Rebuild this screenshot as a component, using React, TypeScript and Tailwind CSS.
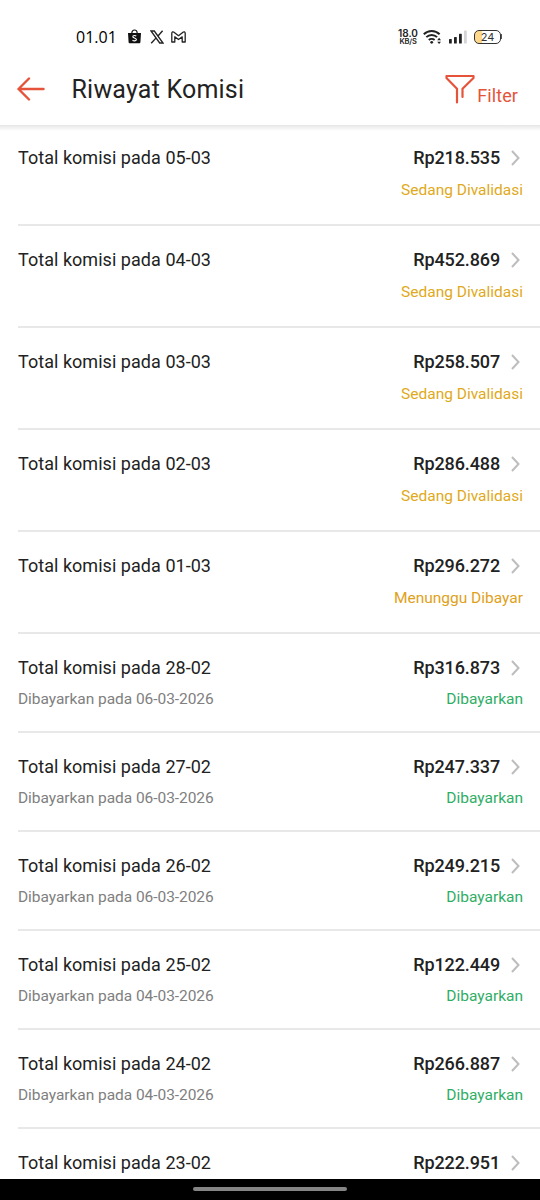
type Status = 'Sedang Divalidasi' | 'Menunggu Dibayar' | 'Dibayarkan';

type Commission = {
  date: string;
  amount: string;
  status?: Status;
  paidAt?: string;
};

const commissions: Commission[] = [
  { date: '05-03', amount: 'Rp218.535', status: 'Sedang Divalidasi' },
  { date: '04-03', amount: 'Rp452.869', status: 'Sedang Divalidasi' },
  { date: '03-03', amount: 'Rp258.507', status: 'Sedang Divalidasi' },
  { date: '02-03', amount: 'Rp286.488', status: 'Sedang Divalidasi' },
  { date: '01-03', amount: 'Rp296.272', status: 'Menunggu Dibayar' },
  { date: '28-02', amount: 'Rp316.873', status: 'Dibayarkan', paidAt: '06-03-2026' },
  { date: '27-02', amount: 'Rp247.337', status: 'Dibayarkan', paidAt: '06-03-2026' },
  { date: '26-02', amount: 'Rp249.215', status: 'Dibayarkan', paidAt: '06-03-2026' },
  { date: '25-02', amount: 'Rp122.449', status: 'Dibayarkan', paidAt: '04-03-2026' },
  { date: '24-02', amount: 'Rp266.887', status: 'Dibayarkan', paidAt: '04-03-2026' },
  { date: '23-02', amount: 'Rp222.951' },
];

const statusColor: Record<Status, string> = {
  'Sedang Divalidasi': 'text-[#dfa920]',
  'Menunggu Dibayar': 'text-[#dfa11a]',
  Dibayarkan: 'text-[#30ae66]',
};

function StatusBar() {
  return (
    <div className="flex h-[56px] items-center justify-between pt-[17px] pr-[38px] pl-[76px]">
      <div className="flex items-center">
        <span className="w-[51px] font-['Open_Sans'] text-[16px] leading-5 font-medium">01.01</span>
        {/* shopping bag */}
        <svg className="h-[15px] w-[15px]" viewBox="0 0 15 15" fill="none">
          <path d="M1 4h13l-.6 9.3a1 1 0 0 1-1 .9H2.600a1 1 0 0 1-1-.9z" fill="#111" />
          <path d="M4.800 4.500C4.800 2.200 6 1 7.500 1s2.700 1.200 2.700 3.500" stroke="#111" strokeWidth="1.200" />
          <path d="M9.300 7.100C8.400 6.200 5.800 6.100 5.800 7.700c0 1.500 3.600 1.100 3.600 2.900 0 1.600-2.800 1.600-3.900.5" stroke="#fff" strokeWidth="1.100" />
        </svg>
        {/* X */}
        <svg className="ml-[8px] h-[14px] w-[14px]" viewBox="0 0 14 14" fill="none" stroke="#222">
          <path d="M1 1h3.300l8.700 12H9.700z" strokeWidth="1.300" />
          <path d="M12.600.8 7.800 6.200M5.900 8.100 1.200 13.300" strokeWidth="1.400" />
        </svg>
        {/* mail */}
        <svg className="ml-[7px] h-[12px] w-[15px]" viewBox="0 0 15 12" fill="none" stroke="#222" strokeWidth="1.300" strokeLinejoin="round">
          <path d="M.8 11V2.200C.8.800 2.200.600 3 1.200l4.500 3.500L12 1.200c.8-.6 2.200-.4 2.200 1V11h-3V5.800L7.500 8.600 3.800 5.800V11z" />
        </svg>
      </div>
      <div className="flex items-center">
        <div className="flex w-[20px] flex-col items-center font-['Inter'] font-semibold text-[#222]">
          <span className="text-[10px] leading-[10px]">18.0</span>
          <span className="text-[7.500px] leading-[8px] tracking-[-0.200px]">KB/S</span>
        </div>
        <svg className="ml-[5px] h-[16px] w-[19px]" viewBox="0 0 19 16" fill="none" stroke="#222">
          <path d="M.8 5.200a11.300 11.300 0 0 1 15.800 0" strokeWidth="2" />
          <path d="M3.300 8.200a7.600 7.600 0 0 1 10.800 0" strokeWidth="1.900" />
          <path d="M5.800 11a4.100 4.100 0 0 1 5.800 0" strokeWidth="1.800" />
          <circle cx="8.700" cy="13.300" r="1.400" fill="#222" stroke="none" />
          <path d="m14.200 11.200 1.900-2.400 1.900 2.400zM14.200 12.700l1.900 2.400 1.900-2.400z" fill="#222" stroke="none" />
        </svg>
        <svg className="ml-[7px] h-[14px] w-[18px]" viewBox="0 0 18 14">
          <rect x="0" y="9" width="2.800" height="4.500" rx=".6" fill="#222" />
          <rect x="5" y="7" width="2.800" height="6.500" rx=".6" fill="#222" />
          <rect x="10" y="3.800" width="2.800" height="9.700" rx=".6" fill="#222" />
          <rect x="15" y="0.500" width="2.800" height="13" rx=".6" fill="#d5d5d8" />
        </svg>
        <div className="ml-[7px] flex items-center">
          <div className="flex h-[14px] w-[27px] items-center justify-center rounded-[5px] border border-[#333] bg-linear-to-r from-[#ffd88c] from-28% to-white to-28% pt-px font-['Inter'] text-[11px] leading-none text-[#333]">
            24
          </div>
          <div className="h-[5px] w-px bg-[#555]" />
        </div>
      </div>
    </div>
  );
}

function Header() {
  return (
    <header className="flex h-[69px] items-start justify-between pr-[22px] pl-[17px]">
      <div className="flex h-[66px] items-center">
        <svg className="h-[26px] w-[28px]" viewBox="0 0 28 26" fill="none" stroke="#e5533a" strokeWidth="2.400" strokeLinecap="round" strokeLinejoin="round">
          <path d="M26.500 13H1.500M12 2.500 1.500 13 12 23.500" />
        </svg>
        <h1 className="ml-[26.500px] pt-px text-[25px] leading-8 tracking-[0.200px] text-[#222]">Riwayat Komisi</h1>
      </div>
      <div className="flex pt-[18px] text-[#e5533a]">
        <svg className="h-[32px] w-[30px]" viewBox="0 0 30 32" fill="none" stroke="currentColor" strokeWidth="2.200" strokeLinejoin="round" strokeLinecap="round">
          <path d="M12 28.500V14.800L1.500 4V2h27v2L17.500 14.800V23" />
        </svg>
        <span className="ml-[2px] pt-[10px] text-[18px] leading-6 tracking-[0.100px]">Filter</span>
      </div>
    </header>
  );
}

function CommissionRow({ item }: { item: Commission }) {
  return (
    <li className={`ml-[18px] shrink-0 border-b-2 border-[#e8e8e8] pt-[22px] pr-[17px] ${item.paidAt ? 'h-[99px]' : 'h-[102px]'}`}>
      <div className="flex h-6 items-center justify-between text-[18px] leading-6 text-[#222]">
        <span className="tracking-[0.040px]">Total komisi pada {item.date}</span>
        <div className="flex items-center">
          <span className="font-medium tracking-[-0.120px]">{item.amount}</span>
          <svg className="mr-[3px] ml-[11px] h-[16px] w-[9px]" viewBox="0 0 9 16" fill="none" stroke="#bdbdbd" strokeWidth="2">
            <path d="m1 1 6.500 7L1 15" />
          </svg>
        </div>
      </div>
      {item.status && (
        <div className={`flex justify-between text-[15.500px] leading-5 ${item.paidAt ? 'pt-[9px]' : 'pt-[10px]'}`}>
          <span className="tracking-[-0.050px] text-[#808080]">{item.paidAt && `Dibayarkan pada ${item.paidAt}`}</span>
          <span className={statusColor[item.status]}>{item.status}</span>
        </div>
      )}
    </li>
  );
}

export default function App() {
  return (
    <div className="flex h-[1200px] w-[540px] flex-col overflow-hidden bg-white font-['Roboto',sans-serif]">
      <StatusBar />
      <Header />
      <div className="h-[6px] shrink-0 bg-linear-to-b from-[#e6e6e6] to-white" />
      <main className="-mt-[7px] min-h-0 flex-1 overflow-hidden">
        <ul className="flex flex-col">
          {commissions.map((item) => (
            <CommissionRow key={item.date} item={item} />
          ))}
        </ul>
      </main>
      <footer className="flex h-[21px] shrink-0 justify-center bg-black pt-[8px]">
        <div className="h-[4px] w-[154px] rounded-full bg-[#858585]" />
      </footer>
    </div>
  );
}
